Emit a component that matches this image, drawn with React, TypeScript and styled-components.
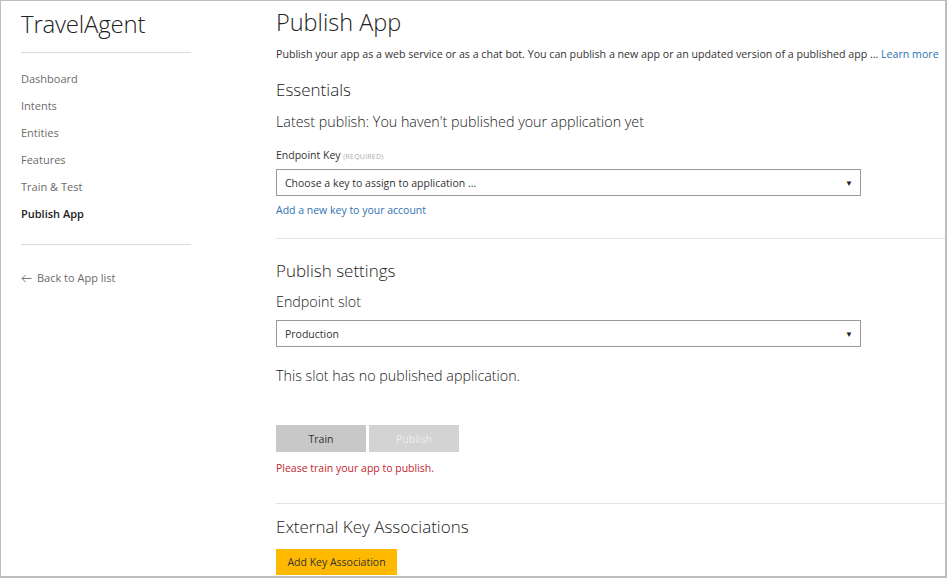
import React from "react";
import styled, { createGlobalStyle } from "styled-components";

const Global = createGlobalStyle`
  html, body { margin: 0; padding: 0; background: #fff; }
  body { font-family: "Segoe UI", "Open Sans", "Noto Sans", sans-serif; color: #333; }
  * { box-sizing: border-box; }
`;

const Frame = styled.div`
  width: 947px;
  height: 578px;
  border: 1px solid #bdbdbd;
  border-right-width: 2px;
  border-bottom-width: 2px;
  overflow: hidden;
  display: flex;
  background: #fff;
`;

const Sidebar = styled.aside`
  width: 275px;
  flex: none;
  padding-left: 20px;
  display: flex;
  flex-direction: column;
`;

const SideInner = styled.div`
  width: 170px;
  display: flex;
  flex-direction: column;
`;

const AppName = styled.div`
  font-size: 24px;
  font-weight: 300;
  line-height: 34px;
  margin-top: 6px;
  color: #222;
  letter-spacing: -0.2px;
`;

const Rule = styled.hr<{ $mt: number }>`
  border: 0;
  border-top: 1px solid #dcdcdc;
  margin: ${(p) => p.$mt}px 0 0 0;
  height: 0;
`;

const NavList = styled.nav`
  display: flex;
  flex-direction: column;
  margin-top: 12px;
`;

const NavItem = styled.a<{ $active?: boolean }>`
  font-size: 11px;
  line-height: 27px;
  height: 27px;
  color: ${(p) => (p.$active ? "#222" : "#6b6b6b")};
  font-weight: ${(p) => (p.$active ? 600 : 400)};
  text-decoration: none;
`;

const BackLink = styled.a`
  margin-top: 26px;
  font-size: 11px;
  line-height: 14px;
  color: #6b6b6b;
  display: flex;
  align-items: center;
  gap: 5px;
`;

const Main = styled.main`
  flex: 1;
  display: flex;
  flex-direction: column;
  padding-top: 5px;
  min-width: 0;
`;

const Col = styled.div`
  width: 585px;
  display: flex;
  flex-direction: column;
  align-items: flex-start;
`;

const PageTitle = styled.h1`
  margin: 0;
  font-size: 23.5px;
  font-weight: 300;
  line-height: 32px;
  color: #222;
`;

const Desc = styled.p`
  margin: 9px 0 0 0;
  font-size: 10.65px;
  line-height: 14px;
  color: #333;
  white-space: nowrap;
`;

const Link = styled.a`
  color: #2f71b5;
  text-decoration: none;
`;

const SectionTitle = styled.h2<{ $mt: number }>`
  margin: ${(p) => p.$mt}px 0 0 0;
  font-size: 17px;
  font-weight: 300;
  line-height: 24px;
  color: #222;
`;

const Para = styled.div<{ $mt: number }>`
  margin-top: ${(p) => p.$mt}px;
  font-size: 14.3px;
  line-height: 20px;
  font-weight: 300;
  color: #222;
`;

const Label = styled.div`
  margin-top: 16px;
  font-size: 10.5px;
  line-height: 14px;
  height: 14px;
  color: #333;
`;

const Req = styled.span`
  font-size: 7px;
  line-height: 14px;
  color: #aaa;
  letter-spacing: 0.2px;
`;

const Select = styled.div<{ $mt: number }>`
  margin-top: ${(p) => p.$mt}px;
  width: 585px;
  height: 27px;
  border: 1px solid #9a9a9a;
  display: flex;
  align-items: center;
  justify-content: space-between;
  padding: 0 7px 0 8px;
  font-size: 10.5px;
  color: #333;
`;

const Caret = styled.span`
  font-size: 8px;
  color: #222;
  line-height: 1;
`;

const SmallLink = styled(Link)`
  margin-top: 7px;
  font-size: 10.5px;
  line-height: 14px;
`;

const FullRule = styled.hr<{ $mt: number }>`
  border: 0;
  border-top: 1px solid #e3e3e3;
  margin: ${(p) => p.$mt}px 0 0 0;
  height: 0;
  width: 100%;
`;

const ButtonRow = styled.div`
  margin-top: 39px;
  display: flex;
  gap: 3px;
`;

const GrayButton = styled.button<{ $disabled?: boolean }>`
  width: 90px;
  height: 27px;
  border: 0;
  font-family: inherit;
  font-size: 10.5px;
  background: ${(p) => (p.$disabled ? "#d3d3d3" : "#c8c8c8")};
  color: ${(p) => (p.$disabled ? "#ececec" : "#333")};
  padding: 0;
`;

const ErrorText = styled.div`
  margin-top: 9px;
  font-size: 10.5px;
  line-height: 14px;
  color: #c4262e;
`;

const YellowButton = styled.button`
  margin-top: 10px;
  height: 26px;
  width: 121px;
  border: 0;
  background: #ffb900;
  font-family: inherit;
  font-size: 10.5px;
  color: #333;
  padding: 0;
`;

export default function App() {
  return (
    <>
      <Global />
      <Frame>
        <Sidebar>
          <SideInner>
            <AppName>TravelAgent</AppName>
            <Rule $mt={11} />
            <NavList>
              <NavItem>Dashboard</NavItem>
              <NavItem>Intents</NavItem>
              <NavItem>Entities</NavItem>
              <NavItem>Features</NavItem>
              <NavItem>Train &amp; Test</NavItem>
              <NavItem $active>Publish App</NavItem>
            </NavList>
            <Rule $mt={17} />
            <BackLink>
              <svg width="11" height="9" viewBox="0 0 11 9" fill="none" stroke="#777" strokeWidth="1">
                <path d="M10.5 4.5H1M4.5 1L1 4.5L4.5 8" />
              </svg>
              Back to App list
            </BackLink>
          </SideInner>
        </Sidebar>
        <Main>
          <Col>
            <PageTitle>Publish App</PageTitle>
            <Desc>
              Publish your app as a web service or as a chat bot. You can publish a new app or an updated version of a published app …{" "}
              <Link>Learn more</Link>
            </Desc>
            <SectionTitle $mt={17}>Essentials</SectionTitle>
            <Para $mt={10}>Latest publish: You haven't published your application yet</Para>
            <Label>
              Endpoint Key <Req>(REQUIRED)</Req>
            </Label>
            <Select $mt={7}>
              <span>Choose a key to assign to application ...</span>
              <Caret>▼</Caret>
            </Select>
            <SmallLink>Add a new key to your account</SmallLink>
          </Col>
          <FullRule $mt={21} />
          <Col>
            <SectionTitle $mt={20}>Publish settings</SectionTitle>
            <Para $mt={9}>Endpoint slot</Para>
            <Select $mt={8}>
              <span>Production</span>
              <Caret>▼</Caret>
            </Select>
            <Para $mt={19}>This slot has no published application.</Para>
            <ButtonRow>
              <GrayButton>Train</GrayButton>
              <GrayButton $disabled>Publish</GrayButton>
            </ButtonRow>
            <ErrorText>Please train your app to publish.</ErrorText>
          </Col>
          <FullRule $mt={28} />
          <Col>
            <SectionTitle $mt={11}>External Key Associations</SectionTitle>
            <YellowButton>Add Key Association</YellowButton>
          </Col>
        </Main>
      </Frame>
    </>
  );
}
